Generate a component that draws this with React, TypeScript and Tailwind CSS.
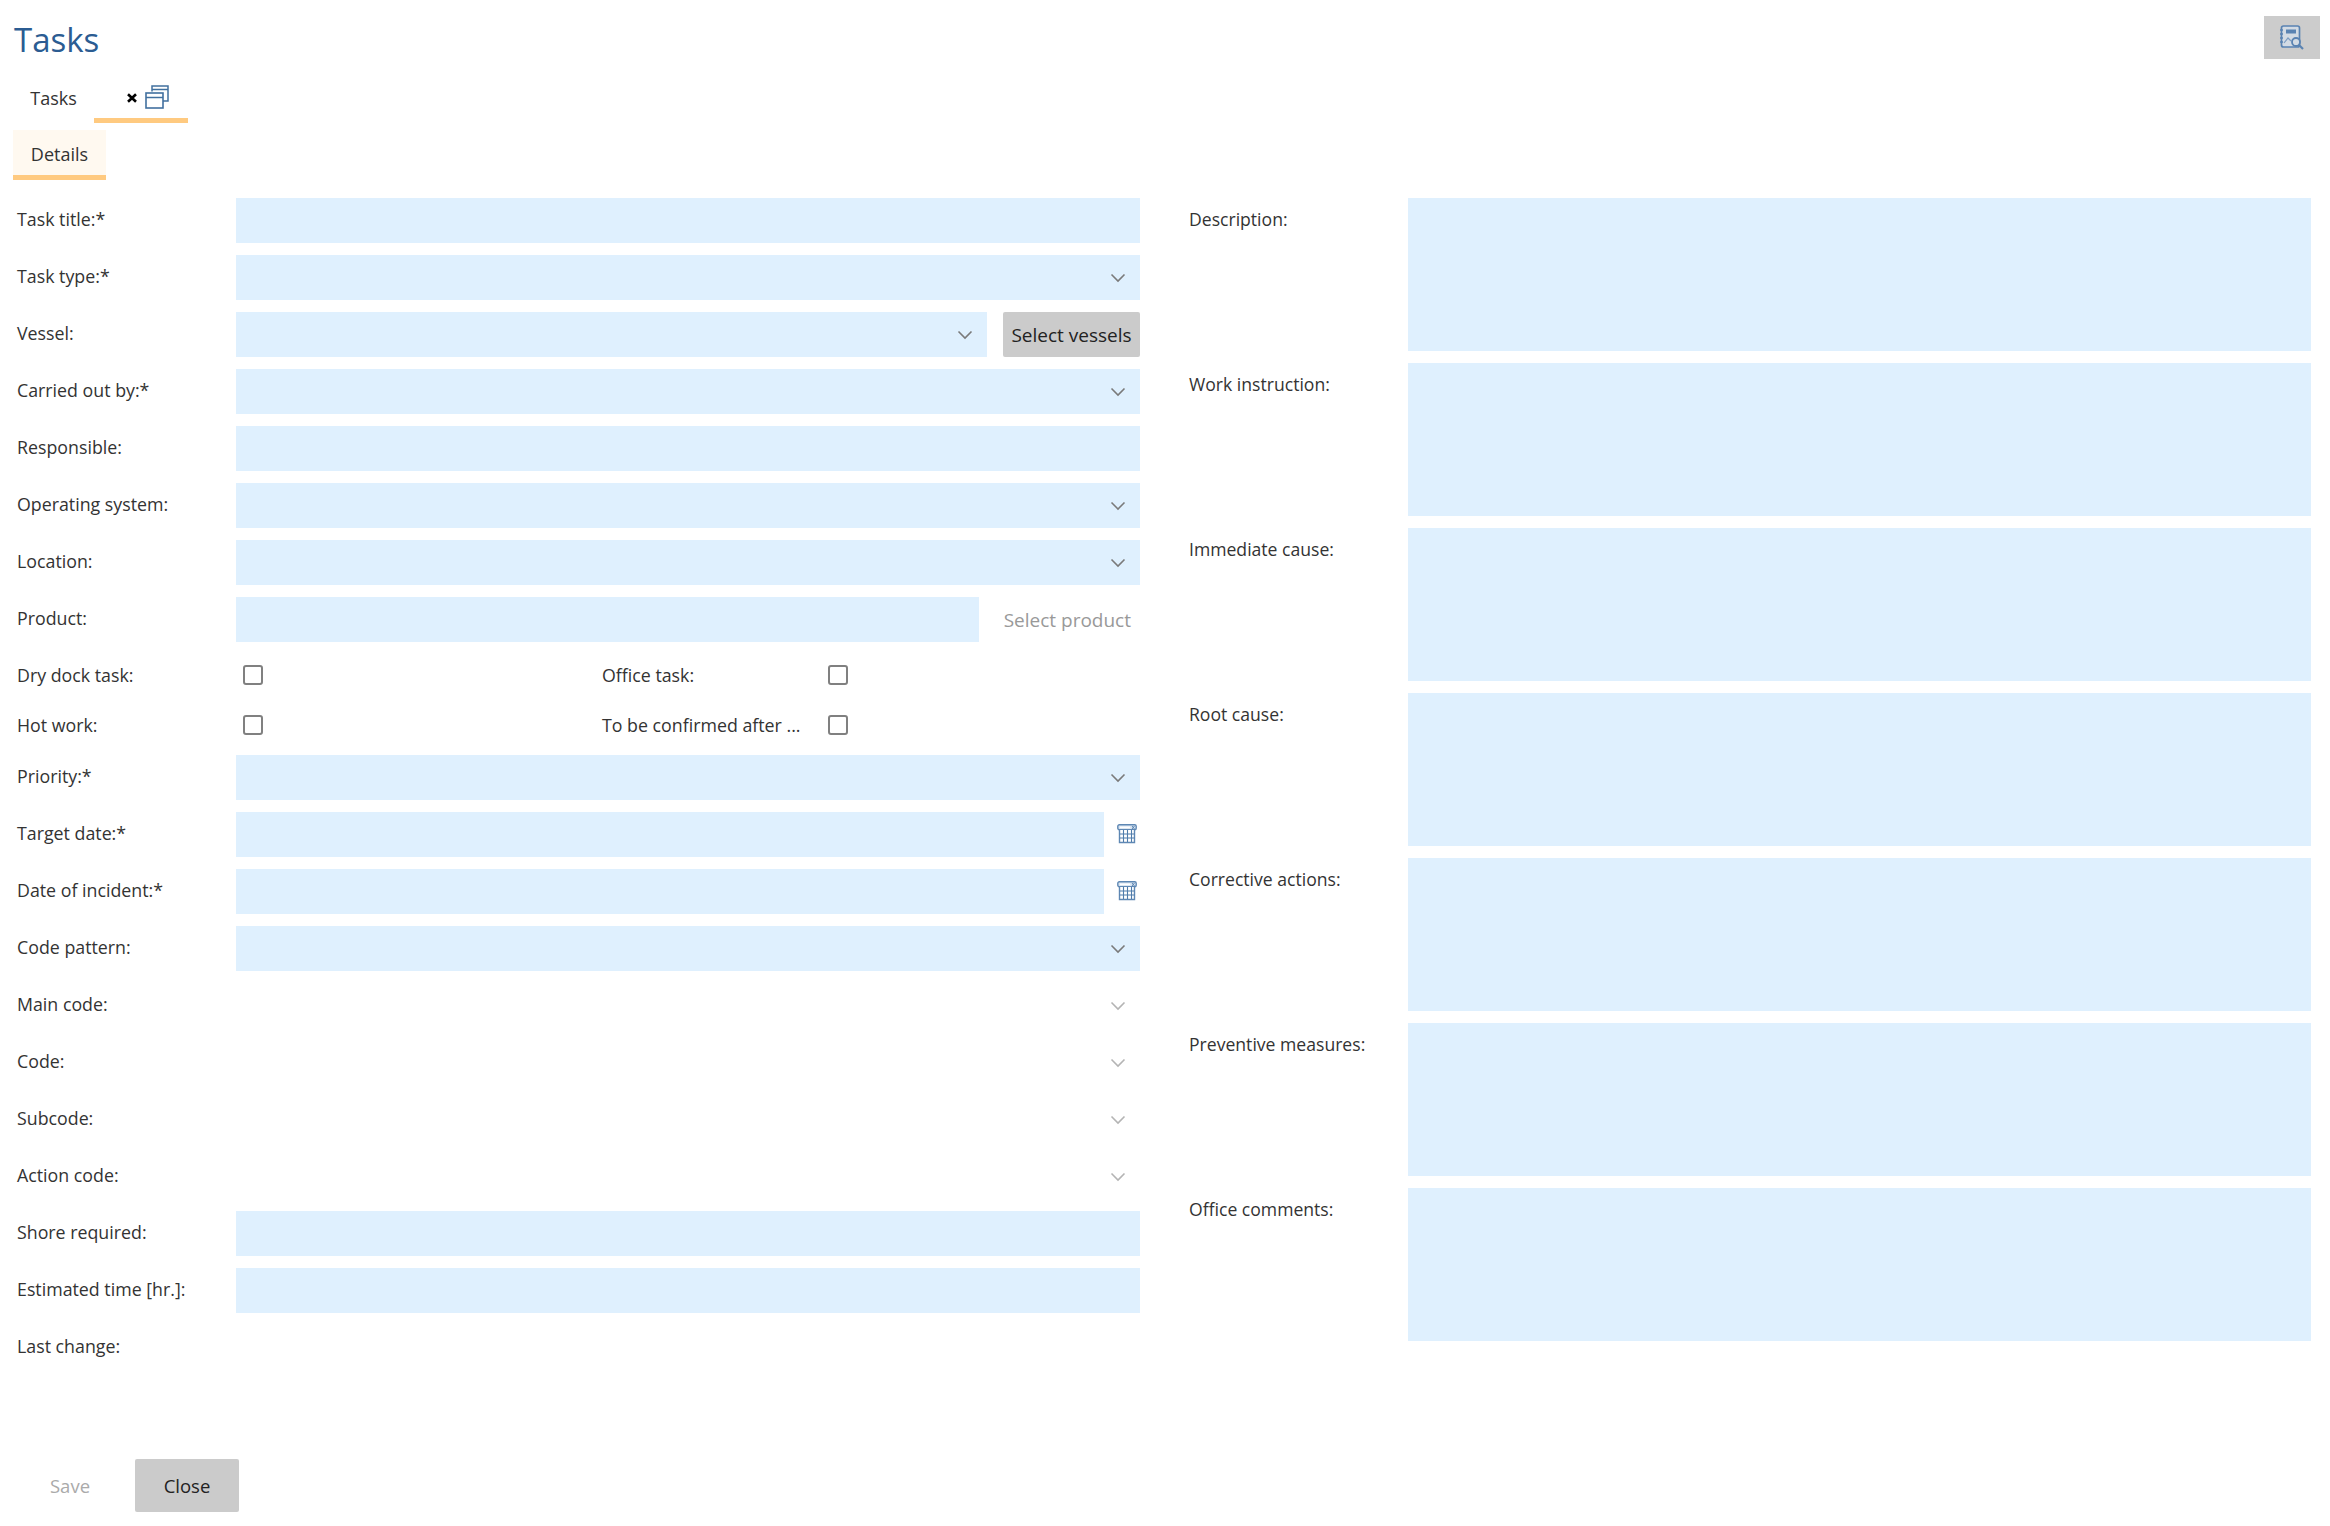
import type { ReactNode } from 'react'

const inputBg = 'bg-[#dff0fe]'

function Chevron({ muted = false }: { muted?: boolean }) {
  return (
    <svg width="16" height="10" viewBox="0 0 16 10" fill="none" className="shrink-0">
      <path d="M1.5 1.5 8 8l6.5-6.5" stroke={muted ? '#b4b4b4' : '#7a7a7a'} strokeWidth="1.6" />
    </svg>
  )
}

function CalendarIcon() {
  return (
    <svg width="20" height="20" viewBox="0 0 20 20" fill="none" className="mb-[2px] shrink-0">
      <rect x="0.8" y="0.8" width="18.4" height="5" rx="1.5" fill="#dbe6f2" stroke="#5f88b4" strokeWidth="1.4" />
      <path d="M2.5 6v12.5h15V6" fill="#fff" stroke="#5f88b4" strokeWidth="1.4" />
      <path d="M2.5 10h15M2.5 14h15M6.5 6v12M10.5 6v12M14.5 6v12" stroke="#4f7cab" strokeWidth="1.1" />
      <path d="M3 3.3h10" stroke="#fff" strokeWidth="1.5" />
      <path d="M15 2l2.5 3M17.5 2 15 5" stroke="#4f7cab" strokeWidth="0.9" />
    </svg>
  )
}

function CloseMark() {
  return (
    <svg width="10" height="10" viewBox="0 0 10 10" fill="none" className="mt-[3px] shrink-0">
      <path d="M1 1.2 9 8.8M9 1.2 1 8.8" stroke="#000" strokeWidth="2.6" />
    </svg>
  )
}

function WindowsIcon() {
  return (
    <svg width="24" height="24" viewBox="0 0 24 24" fill="none">
      <path d="M7 6.5V1h16v15h-5" stroke="#41709f" strokeWidth="1.5" />
      <path d="M7 4.5h16" stroke="#41709f" strokeWidth="1.5" />
      <rect x="1" y="8" width="17" height="15" stroke="#41709f" strokeWidth="1.6" />
      <path d="M1 12.5h17" stroke="#41709f" strokeWidth="1.5" />
    </svg>
  )
}

function ReportIcon() {
  return (
    <svg width="26" height="26" viewBox="0 0 26 26" fill="none">
      <rect x="2.5" y="1" width="18" height="21" rx="2" fill="#d3dbe4" stroke="#5a83b2" strokeWidth="1.7" />
      <path d="M1 5h3M1 9h3M1 13h3M1 17h3" stroke="#5a83b2" strokeWidth="1.4" />
      <rect x="7" y="4.5" width="10" height="4" fill="#5a83b2" />
      <path d="M5 18l4-5 3 3" stroke="#7d9dc2" strokeWidth="1.2" />
      <circle cx="17" cy="17" r="4" fill="#d3dbe4" stroke="#5a83b2" strokeWidth="1.8" />
      <path d="m20 20 4 4" stroke="#5a83b2" strokeWidth="2.2" />
    </svg>
  )
}

function Row({ label, children }: { label: string; children?: ReactNode }) {
  return (
    <div className="mb-[12px] flex h-[45px] items-center">
      <div className="w-[219px] shrink-0 pb-[3px]">{label}</div>
      <div className="flex h-full flex-1 items-center">{children}</div>
    </div>
  )
}

function TextField({ label }: { label: string }) {
  return (
    <Row label={label}>
      <div className={`h-full w-full ${inputBg}`} />
    </Row>
  )
}

function SelectBox({ width = 'w-full' }: { width?: string }) {
  return (
    <div className={`flex h-full items-center justify-end pr-[14px] pt-[1px] ${inputBg} ${width}`}>
      <Chevron />
    </div>
  )
}

function SelectField({ label }: { label: string }) {
  return (
    <Row label={label}>
      <SelectBox />
    </Row>
  )
}

function DisabledSelect({ label }: { label: string }) {
  return (
    <Row label={label}>
      <div className="flex h-full w-full items-center justify-end pr-[14px] pt-[1px]">
        <Chevron muted />
      </div>
    </Row>
  )
}

function DateField({ label }: { label: string }) {
  return (
    <Row label={label}>
      <div className={`h-full flex-1 ${inputBg}`} />
      <div className="flex w-[36px] justify-end pr-[3px]">
        <CalendarIcon />
      </div>
    </Row>
  )
}

function Checkbox() {
  return <div className="h-[20px] w-[20px] rounded-[3px] border-2 border-[#808080] bg-white" />
}

function CheckRow({ left, right }: { left: string; right: string }) {
  return (
    <div className="flex h-[50px] items-center">
      <div className="w-[226px] shrink-0 pb-[1px]">{left}</div>
      <div className="w-[359px] shrink-0">
        <Checkbox />
      </div>
      <div className="w-[226px] shrink-0 pb-[1px]">{right}</div>
      <Checkbox />
    </div>
  )
}

function TextArea({ label }: { label: string }) {
  return (
    <div className="mb-[12px] flex h-[153px]">
      <div className="w-[219px] shrink-0 pt-[8px]">{label}</div>
      <div className={`h-full flex-1 ${inputBg}`} />
    </div>
  )
}

export default function App() {
  return (
    <div className="h-[1526px] w-full overflow-hidden bg-white font-['Open_Sans',sans-serif] text-[17.8px] leading-[26px] text-[#333]">
      <div className="flex h-[80px] items-start justify-between pl-[14px] pr-[10px]">
        <h1 className="pt-[15px] text-[33px] leading-[50px] text-[#2b5c92]">Tasks</h1>
        <button
          type="button"
          className="mt-[16px] flex h-[43px] w-[56px] items-center justify-center bg-[#cccccc]"
        >
          <ReportIcon />
        </button>
      </div>

      <div className="flex h-[43px] pl-[13px] text-[18px]">
        <div className="flex h-full w-[81px] items-center justify-center pb-[7px]">Tasks</div>
        <div className="flex h-full w-[94px] items-center justify-end gap-[8px] border-b-[5px] border-[#ffca80] pb-[5px] pr-[19px]">
          <CloseMark />
          <WindowsIcon />
        </div>
      </div>

      <div className="mt-[7px] pl-[13px] text-[18px]">
        <div className="flex h-[50px] w-[93px] items-center justify-center border-b-[5px] border-[#ffca80] bg-[#fff9f0] pt-[2px]">
          Details
        </div>
      </div>

      <div className="mt-[18px] flex">
        <div className="ml-[17px] w-[1123px] shrink-0">
          <TextField label="Task title:*" />
          <SelectField label="Task type:*" />
          <Row label="Vessel:">
            <SelectBox width="w-[751px]" />
            <button
              type="button"
              className="ml-auto h-full w-[137px] rounded-[2px] bg-[#cbcbcb] text-[19px] text-[#222]"
            >
              Select vessels
            </button>
          </Row>
          <SelectField label="Carried out by:*" />
          <TextField label="Responsible:" />
          <SelectField label="Operating system:" />
          <SelectField label="Location:" />
          <Row label="Product:">
            <div className={`h-full w-[743px] ${inputBg}`} />
            <button type="button" className="ml-auto pr-[9px] text-[19px] text-[#999]">
              Select product
            </button>
          </Row>
          <div className="-mt-[4px] mb-[5px]">
            <CheckRow left="Dry dock task:" right="Office task:" />
            <CheckRow left="Hot work:" right="To be confirmed after ..." />
          </div>
          <SelectField label="Priority:*" />
          <DateField label="Target date:*" />
          <DateField label="Date of incident:*" />
          <SelectField label="Code pattern:" />
          <DisabledSelect label="Main code:" />
          <DisabledSelect label="Code:" />
          <DisabledSelect label="Subcode:" />
          <DisabledSelect label="Action code:" />
          <TextField label="Shore required:" />
          <TextField label="Estimated time [hr.]:" />
          <Row label="Last change:" />
        </div>

        <div className="ml-[49px] mr-[19px] flex-1 text-[17.6px]">
          <TextArea label="Description:" />
          <TextArea label="Work instruction:" />
          <TextArea label="Immediate cause:" />
          <TextArea label="Root cause:" />
          <TextArea label="Corrective actions:" />
          <TextArea label="Preventive measures:" />
          <TextArea label="Office comments:" />
        </div>
      </div>

      <div className="mt-[77px] flex items-center pl-[30px] text-[18.5px]">
        <button type="button" className="h-[53px] w-[80px] text-[#aaa]">
          Save
        </button>
        <button
          type="button"
          className="ml-[25px] h-[53px] w-[104px] rounded-[2px] bg-[#cbcbcb] text-[#222]"
        >
          Close
        </button>
      </div>
    </div>
  )
}
